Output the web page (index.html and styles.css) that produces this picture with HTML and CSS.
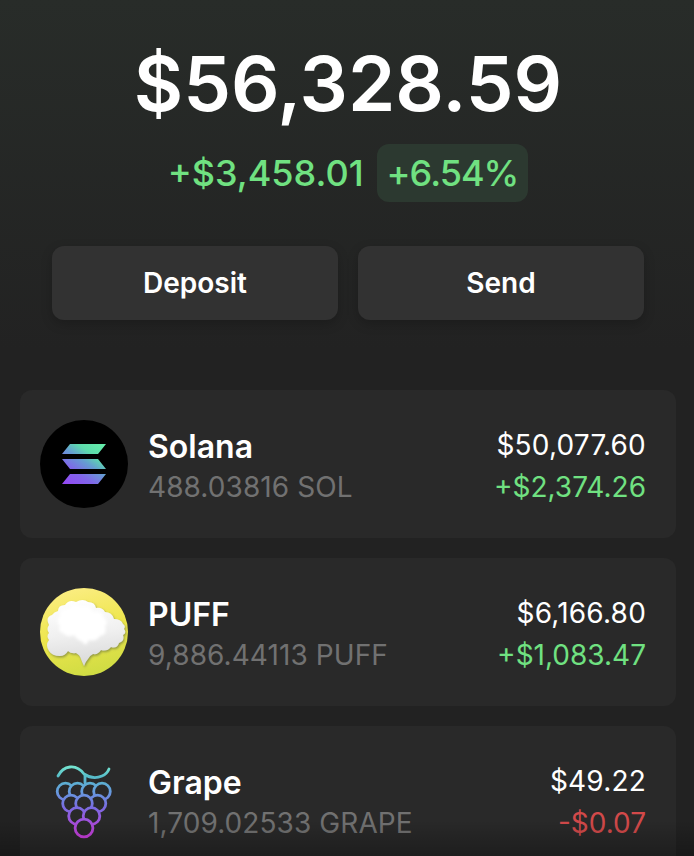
FILE: index.html
```html
<!DOCTYPE html>
<html lang="en">
<head>
<meta charset="utf-8">
<title>Wallet</title>
<link rel="stylesheet" href="styles.css">
</head>
<body>
<main class="wallet">
  <header class="summary">
    <h1 class="balance">$56,328.59</h1>
    <div class="change">
      <span class="change-amount">+$3,458.01</span>
      <span class="change-percent">+6.54%</span>
    </div>
    <div class="actions">
      <button class="action" type="button">Deposit</button>
      <button class="action" type="button">Send</button>
    </div>
  </header>
  <section class="tokens">
    <article class="token">
      <svg class="token-icon" viewBox="0 0 88 88">
        <defs>
          <linearGradient id="sol" gradientUnits="userSpaceOnUse" x1="28" y1="66" x2="58" y2="22">
            <stop offset="0" stop-color="#9448f5"/><stop offset=".3" stop-color="#8066e9"/><stop offset=".55" stop-color="#659dd2"/><stop offset=".75" stop-color="#5ddbac"/><stop offset="1" stop-color="#64edaa"/>
          </linearGradient>
        </defs>
        <circle cx="44" cy="44" r="44" fill="#000"/>
        <path fill="url(#sol)" d="M30 24h36l-8 10H22zM22 39h36l8 10H30zM30 54h36l-8 10H22z"/>
      </svg>
      <div class="token-info">
        <h2 class="token-name">Solana</h2>
        <p class="token-amount">488.03816 SOL</p>
      </div>
      <div class="token-value">
        <p class="value">$50,077.60</p>
        <p class="delta up">+$2,374.26</p>
      </div>
    </article>
    <article class="token">
      <svg class="token-icon" viewBox="0 0 88 88">
        <defs>
          <linearGradient id="sun" x1=".3" y1="0" x2=".55" y2="1">
            <stop offset="0" stop-color="#fbed83"/><stop offset=".5" stop-color="#eee64d"/><stop offset="1" stop-color="#cfdc43"/>
          </linearGradient>
          <linearGradient id="cloud" x1=".4" y1="0" x2=".55" y2="1">
            <stop offset="0" stop-color="#fff"/><stop offset=".5" stop-color="#f0f0f0"/><stop offset="1" stop-color="#d8d8d8"/>
          </linearGradient>
          <filter id="shade" x="-20%" y="-20%" width="140%" height="140%"><feDropShadow dx="1" dy="1.5" stdDeviation=".8" flood-color="#6c7440" flood-opacity=".65"/></filter>
          <filter id="soft" x="-20%" y="-20%" width="140%" height="140%"><feGaussianBlur stdDeviation="1.6"/></filter>
        </defs>
        <circle cx="44" cy="44" r="44" fill="url(#sun)"/>
        <path filter="url(#shade)" fill="url(#cloud)" d="M9 37Q5 29 12 27Q14 24 18 23Q18 17 25 17Q29 11 36 14Q43 10 48 14Q55 14 56 20Q62 19 65 24Q72 24 74 31Q81 31 83 36Q86 38 84 41Q87 45 83 47Q85 53 79 55Q77 61 71 59Q67 64 61 62Q58 67 53 66Q49 68 48 71Q46 73 44 78Q42 74 41 71Q40 67 36 65Q31 66 28 63Q25 68 20 68Q12 68 9 63Q5 57 9 52Q6 48 9 45Q6 41 9 37Z"/>
        <path filter="url(#soft)" fill="#fff" d="M20 28Q20 20 28 21Q34 14 41 19Q49 15 53 24Q62 22 64 30Q69 33 65 39Q68 46 60 48Q56 54 49 52Q45 60 43 54Q37 52 34 47Q27 50 23 45Q17 43 20 38Q15 32 20 28Z"/>
      </svg>
      <div class="token-info">
        <h2 class="token-name">PUFF</h2>
        <p class="token-amount">9,886.44113 PUFF</p>
      </div>
      <div class="token-value">
        <p class="value">$6,166.80</p>
        <p class="delta up">+$1,083.47</p>
      </div>
    </article>
    <article class="token">
      <svg class="token-icon" viewBox="0 0 88 88">
        <defs>
          <linearGradient id="vine" gradientUnits="userSpaceOnUse" x1="0" y1="10" x2="0" y2="81">
            <stop offset="0" stop-color="#76e6d0"/><stop offset=".15" stop-color="#56bcc8"/><stop offset=".35" stop-color="#659ddd"/><stop offset=".58" stop-color="#796ce0"/><stop offset=".82" stop-color="#a94ddd"/><stop offset="1" stop-color="#cc3fe0"/>
          </linearGradient>
        </defs>
        <g fill="none" stroke="url(#vine)" stroke-width="2.8" stroke-linecap="round">
          <path d="M18 20Q22 12 30 11Q38 10 44 18Q53 24 62 20Q67 18 69 13M45 19V27"/>
          <g fill="#292929">
            <circle cx="25.5" cy="35.5" r="8.3"/><circle cx="37.5" cy="35.5" r="8.3"/><circle cx="50" cy="35.5" r="8.3"/><circle cx="62" cy="35.5" r="8.3"/>
            <circle cx="31" cy="47.5" r="8.3"/><circle cx="57.5" cy="47.5" r="8.3"/><circle cx="44" cy="47.5" r="8.3"/>
            <circle cx="37" cy="60" r="8.3"/><circle cx="51.5" cy="60" r="8.3"/>
            <circle cx="44" cy="72" r="8.9"/>
          </g>
        </g>
      </svg>
      <div class="token-info">
        <h2 class="token-name">Grape</h2>
        <p class="token-amount">1,709.02533 GRAPE</p>
      </div>
      <div class="token-value">
        <p class="value">$49.22</p>
        <p class="delta down">-$0.07</p>
      </div>
    </article>
  </section>
</main>
</body>
</html>
```
FILE: styles.css
```css
* { box-sizing: border-box; }
body { margin: 0; background: #222; overflow: hidden; }
h1, h2, p { margin: 0; }
.wallet {
  position: relative;
  height: 856px;
  overflow: hidden;
  padding: 39px 18px 0 20px;
  background: linear-gradient(#282c29 0, #222 350px);
  color: #fff;
  font-family: Inter, "Liberation Sans", sans-serif;
}
.wallet::after {
  content: "";
  position: absolute;
  inset: auto 0 0;
  height: 36px;
  background: linear-gradient(transparent, rgba(0, 0, 0, .28));
}
.summary { display: flex; flex-direction: column; align-items: center; }
.balance { font-size: 76px; font-weight: 600; line-height: 88px; }
.change {
  display: flex;
  align-items: center;
  gap: 13px;
  margin-top: 17px;
  color: #70e181;
  font-size: 36px;
  font-weight: 500;
  line-height: 58px;
}
.change-percent { padding: 0 10px; border-radius: 12px; background: #2c3930; letter-spacing: -1px; }
.actions { display: flex; gap: 20px; margin-top: 44px; }
.action {
  width: 286px;
  height: 74px;
  padding: 0;
  border: 0;
  border-radius: 12px;
  background: #323232;
  box-shadow: 0 4px 12px rgba(0, 0, 0, .2);
  color: #fff;
  font: 600 28px/34px Inter, "Liberation Sans", sans-serif;
}
.tokens { display: flex; flex-direction: column; gap: 20px; margin-top: 70px; }
.token {
  display: flex;
  align-items: center;
  flex: none;
  height: 148px;
  padding: 0 30px 0 20px;
  border-radius: 12px;
  background: #292929;
}
.token-icon { width: 88px; height: 88px; flex: none; margin-right: 20px; }
.token-info { flex: 1; padding-top: 4px; }
.token-name { font-size: 32px; font-weight: 600; line-height: 42px; }
.token-amount { color: #717171; font-size: 28px; line-height: 38px; letter-spacing: .08px; }
.token-value { padding-top: 4px; text-align: right; font-size: 28px; line-height: 42px; }
.value { font-weight: 400; letter-spacing: .2px; }
.up { color: #70e181; }
.down { color: #d2494a; }
```
